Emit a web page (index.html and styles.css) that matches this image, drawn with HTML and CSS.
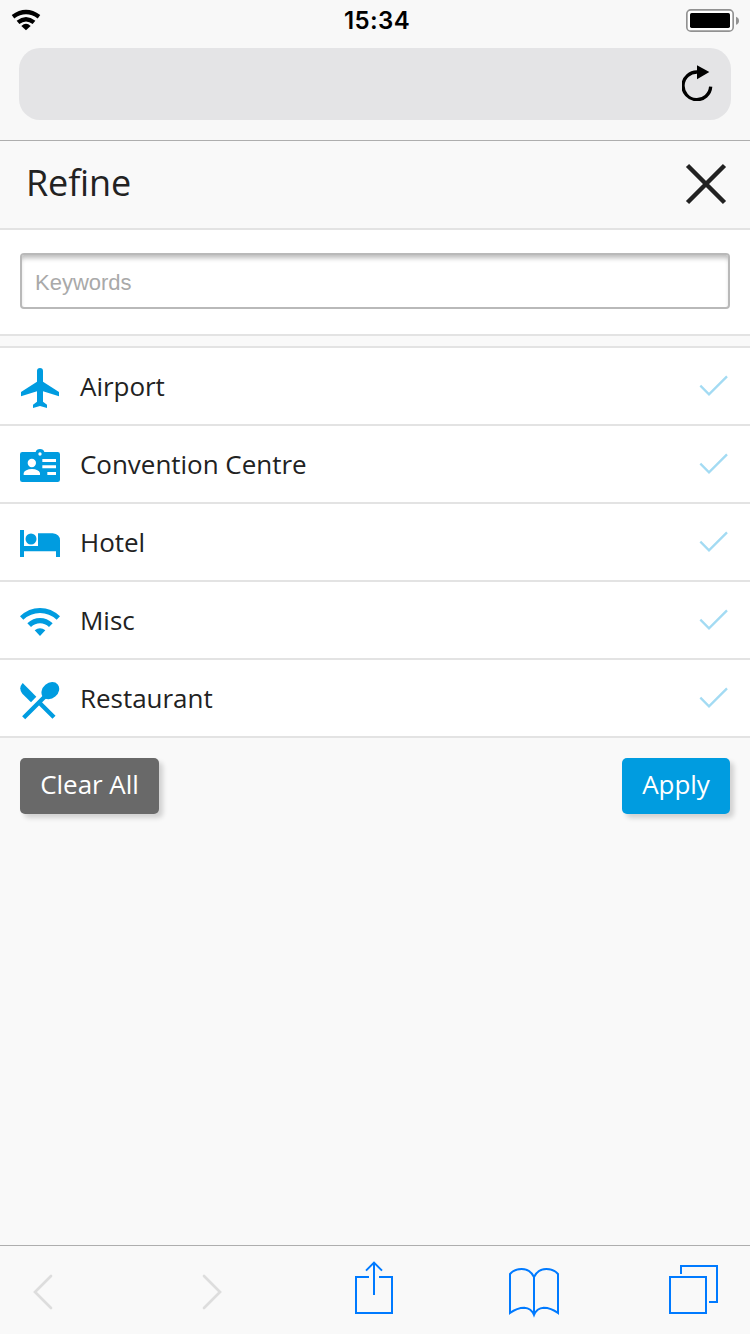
FILE: index.html
```html
<!DOCTYPE html>
<html lang="en">
<head>
<meta charset="utf-8">
<title>Refine</title>
<link rel="stylesheet" href="styles.css">
</head>
<body>
<div class="screen">
  <header class="browser">
    <div class="status">
      <svg class="status-wifi" width="30" height="22" viewBox="33 27 90 66"><g fill="none" stroke="#000"><path stroke-width="13" d="M39 50Q78 22 117 50"/><path stroke-width="13" d="M54 67Q78 48 102 67"/></g><path d="M64 78Q78 64 92 78L78 91Z"/></svg>
      <span class="clock">15:34</span>
      <svg class="battery" width="54" height="24" viewBox="78 27 162 72"><rect x="80.500" y="29.500" width="139" height="64" rx="12" fill="#fff" stroke="#929292" stroke-width="5"/><rect x="90" y="39" width="120" height="45" rx="5"/><path fill="#929292" d="M228 50Q237 53 237 62T228 74Z"/></svg>
    </div>
    <div class="address">
      <svg width="32" height="36" viewBox="65 196 96 108"><path fill="none" stroke="#000" stroke-width="10" d="M112 217A41.500 41.500 0 1 0 151 261"/><path d="M110 197L147 217L110 239Z"/></svg>
    </div>
  </header>
  <div class="titlebar">
    <h1>Refine</h1>
    <svg class="close" width="42" height="42" viewBox="0 0 42 42"><path d="M2.500 2.500L39.500 39.500M39.500 2.500L2.500 39.500" stroke="#222" stroke-width="4.500" fill="none"/></svg>
  </div>
  <div class="search"><input class="keywords" type="text" placeholder="Keywords"></div>
  <ul class="list">
    <li class="row">
      <svg class="icon" viewBox="60 39 120 120"><path d="M111 48Q111 39 120 39T129 48V80L177 111V124L129 109V140L141 149V159L120 153L99 159V149L111 140V109L63 124V111L111 80Z"/></svg>
      <span class="label">Airport</span>
      <svg class="check" viewBox="148 400 90 66"><path d="M152 435L178 461L232 407"/></svg>
    </li>
    <li class="row">
      <svg class="icon" viewBox="60 273 120 120"><path fill-rule="evenodd" d="M67 291H107Q109 282 120 282T133 291H173Q180 291 180 298V374Q180 381 173 381H67Q60 381 60 374V298Q60 291 67 291ZM115 297A5 5 0 1 0 125 297A5 5 0 1 0 115 297ZM83 324A12.500 12.500 0 1 0 108 324A12.500 12.500 0 1 0 83 324ZM71 360H120V354Q116 343 96 342Q75 343 71 354ZM127 312H168V321H127ZM127 331H168V340H127ZM142 351H168V360H142Z"/></svg>
      <span class="label">Convention Centre</span>
      <svg class="check" viewBox="148 400 90 66"><path d="M152 435L178 461L232 407"/></svg>
    </li>
    <li class="row">
      <svg class="icon" viewBox="60 72 120 120"><path d="M60 90H72V138H114V100H158Q180 102 180 122V171H168V154H72V171H60Z"/><circle cx="93" cy="117" r="16.500"/></svg>
      <span class="label">Hotel</span>
      <svg class="check" viewBox="148 400 90 66"><path d="M152 435L178 461L232 407"/></svg>
    </li>
    <li class="row">
      <svg class="icon" viewBox="60 306 120 120"><path d="M60 349Q86 324 120 324T180 349L170 359Q148 339 120 339T70 359ZM82 370Q99 354 120 354T158 370L147 381Q135 370 120 370T93 381ZM104 391Q120 379 136 391L120 408Z"/></svg>
      <span class="label">Misc</span>
      <svg class="check" viewBox="148 400 90 66"><path d="M152 435L178 461L232 407"/></svg>
    </li>
    <li class="row">
      <svg class="icon" viewBox="60 540 120 120"><path d="M68 549L109 590L93 607L67 581Q54 565 68 549Z"/><ellipse cx="151" cy="572" rx="29" ry="23" transform="rotate(-40 151 572)"/><path fill="none" stroke="#009ce0" stroke-width="13" d="M134 590L71 653M116 606L162 652"/></svg>
      <span class="label">Restaurant</span>
      <svg class="check" viewBox="148 400 90 66"><path d="M152 435L178 461L232 407"/></svg>
    </li>
  </ul>
  <div class="actions">
    <button class="btn clear">Clear All</button>
    <button class="btn apply">Apply</button>
  </div>
  <nav class="toolbar">
    <svg class="back" width="22" height="60" viewBox="96 87 66 180"><path d="M153 138L105 186L153 234"/></svg>
    <svg class="forward" width="22" height="60" viewBox="603 87 66 180"><path d="M612 138L660 186L612 234"/></svg>
    <svg class="share" width="38" height="60" viewBox="75 87 114 180"><path d="M117 141H78V249H186V141H147M132 195V98M108 122L132 98L156 122"/></svg>
    <svg class="book" width="52" height="60" viewBox="534 87 156 180"><path d="M612 255V141Q600 117 575 117Q553 117 540 132V249Q561 233 583 233Q604 234 612 255Q620 234 641 233Q663 233 684 249V132Q671 117 649 117Q624 117 612 141"/></svg>
    <svg class="tabs" width="50" height="60" viewBox="87 87 150 180"><path d="M90 141H198V249H90ZM123 132V108H231V216H207"/></svg>
  </nav>
</div>
</body>
</html>
```
FILE: styles.css
```css
* { box-sizing: border-box; }
body { margin: 0; background: #f9f9f9; color: #222; font-family: "Open Sans", "Noto Sans", sans-serif; }
svg { display: block; flex: none; }
.screen { width: 750px; height: 1334px; display: flex; flex-direction: column; overflow: hidden; }
.browser { height: 141px; flex: none; background: #f8f8f8; border-bottom: 1px solid #aeaeae; }
.status { height: 48px; padding: 9px 10px 0 11px; display: grid; grid-template-columns: 1fr auto 1fr; align-items: start; }
.battery { justify-self: end; }
.clock { padding-left: 3px; color: #000; font: 600 24px/24px Inter, sans-serif; letter-spacing: .4px; }
.address { height: 72px; margin: 0 19px; padding: 17px 17px 0 0; border-radius: 21px; background: #e4e4e6; display: flex; justify-content: flex-end; }
.titlebar { height: 89px; flex: none; border-bottom: 2px solid #e3e3e3; padding: 0 23px 0 26px; display: flex; justify-content: space-between; align-items: center; }
.titlebar h1 { margin: 0 0 3px; font-size: 36px; font-weight: 400; line-height: 48px; letter-spacing: -.15px; }
.close { margin-bottom: 2px; }
.search { height: 106px; flex: none; padding: 23px 20px; background: #fff; border-bottom: 2px solid #e3e3e3; }
.keywords { display: block; width: 710px; height: 56px; margin: 0; padding: 4px 13px 0; border: 2px solid #b9b9b9; border-radius: 4px; background: #fff; box-shadow: inset 0 5px 5px -2px #bbb; font: 22px "Liberation Sans", sans-serif; }
.keywords::placeholder { color: #a9a9a9; opacity: 1; }
.list { list-style: none; margin: 10px 0 0; padding: 0; border-top: 2px solid #e3e3e3; background: #fff; }
.row { height: 78px; padding: 0 21px 0 20px; border-bottom: 2px solid #e3e3e3; display: flex; align-items: center; }
.icon { width: 40px; height: 40px; margin: 4px 20px 0 0; fill: #009ce0; }
.label { flex: 1; font-size: 26px; line-height: 36px; letter-spacing: -.03px; }
.check { width: 30px; height: 22px; margin-top: -3px; fill: none; stroke: #a3dbf3; stroke-width: 7; }
.actions { padding: 20px; display: flex; justify-content: space-between; }
.btn { height: 56px; padding: 0 20px 5px; border: 0; border-radius: 5px; color: #fff; font: 26px/36px "Open Sans", sans-serif; letter-spacing: -.05px; box-shadow: 4px 4px 5px rgba(0,0,0,.16); }
.clear { width: 139px; background: #696969; }
.apply { width: 108px; background: #009ce0; }
.toolbar { height: 89px; margin-top: auto; padding: 13px 0 0 32px; border-top: 1px solid #aeaeae; display: flex; }
.toolbar svg { fill: none; stroke: #007aff; stroke-width: 6; }
.toolbar .back, .toolbar .forward { stroke: #ddd; stroke-width: 8; stroke-linecap: round; }
.forward { margin-left: 147px; }
.share { margin-left: 132px; }
.book { margin-left: 115px; }
.tabs { margin-left: 109px; }
```
